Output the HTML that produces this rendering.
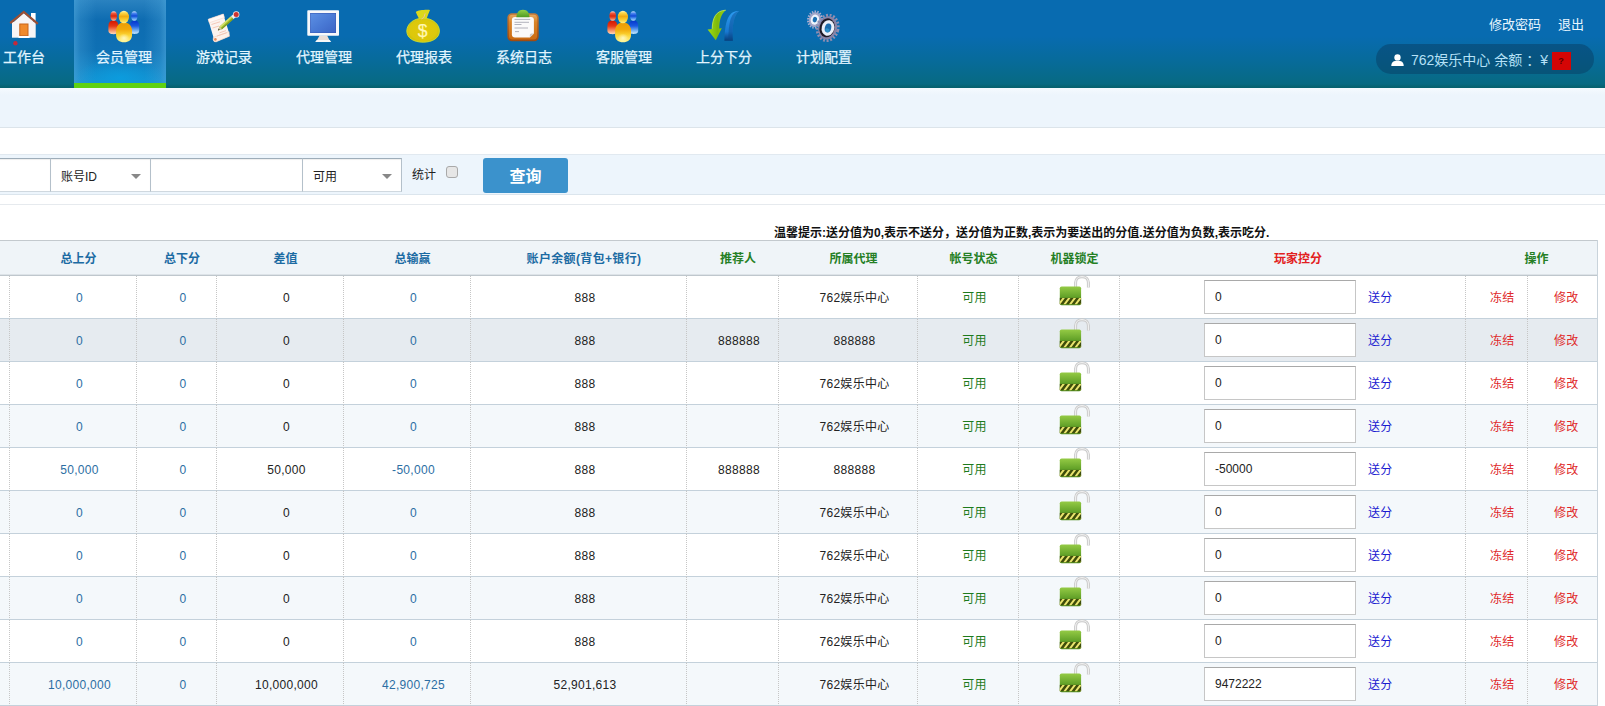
<!DOCTYPE html>
<html lang="zh-CN">
<head>
<meta charset="utf-8">
<title>会员管理</title>
<style>
*{box-sizing:border-box;}
html,body{margin:0;padding:0;}
body{width:1605px;height:706px;overflow:hidden;background:#fff;position:relative;
  font-family:"Liberation Sans","Noto Sans CJK SC",sans-serif;font-size:12px;color:#222;}
a{text-decoration:none;}
/* ---------- header ---------- */
#hd{position:absolute;left:0;top:0;width:1605px;height:88px;
  background:linear-gradient(to bottom,#086bb0 0,#086bb0 36px,#076b9b 60px,#076a82 84px,#06626f 87px,#06626f 88px);}
#nav{position:absolute;left:-26px;top:0;height:88px;margin:0;padding:0;list-style:none;white-space:nowrap;}
#nav li{position:absolute;top:0;width:92px;height:88px;padding-left:8px;}
#nav li span{position:absolute;left:8px;width:84px;top:48px;line-height:18px;text-align:center;
  font-size:14px;color:#e2f5ff;-webkit-text-stroke:.25px #e2f5ff;}
#nav li.on{background:
  radial-gradient(ellipse 44px 20px at 50% 78px,rgba(10,158,224,.85) 0,rgba(10,158,224,0) 100%),
  linear-gradient(to right,rgba(70,160,215,.7) 0,rgba(70,160,215,.35) 6px,rgba(70,160,215,0) 22px,rgba(70,160,215,0) 70px,rgba(70,160,215,.35) 86px,rgba(70,160,215,.7) 92px),
  linear-gradient(to bottom,#2a82c0 0,#0e6cb1 20px,#0e70b4 50px,#1590cf 80px,#1590cf 100%);
  border-bottom:5px solid #5fd111;}
#icons{position:absolute;left:0;top:0;}
#tr{position:absolute;top:16px;right:21px;font-size:13px;color:#eaf7ff;line-height:18px;}
#tr a{color:#eaf7ff;margin-left:14px;}
#pill{position:absolute;left:1376px;top:44px;width:218px;height:30px;border-radius:15px;
  background:rgba(8,62,100,.5);color:#b5e1f7;font-size:14px;line-height:30px;white-space:nowrap;}
#pill .t{position:absolute;left:35px;top:1px;}
#pill .q{position:absolute;left:175.6px;top:7.5px;width:19px;height:18px;background:#d40505;color:#5a0000;
  font-size:9px;font-weight:bold;line-height:18px;text-align:center;}
/* ---------- bands ---------- */
#b1{position:absolute;left:0;top:88px;width:1605px;height:40px;background:linear-gradient(to bottom,#f5fafe 0,#edf5fc 7px);border-bottom:1px solid #dce4ea;}
#b2{position:absolute;left:0;top:154px;width:1605px;height:41px;background:#edf5fc;border-top:1px solid #e1e9f0;border-bottom:1px solid #dbe5ed;}
#ln{position:absolute;left:0;top:204px;width:1605px;height:1px;background:#e6eaee;}
.fi{position:absolute;top:158px;height:34px;background:#fff;border:1px solid #b4c0ca;border-top-color:#9eadb9;border-bottom-color:#cfd8df;
  font-size:12px;line-height:32px;color:#222;padding:2px 0 0 10px;box-shadow:inset 0 1px 1px rgba(0,0,0,.07);}
.fi i{position:absolute;right:9px;top:15px;width:0;height:0;border-left:5px solid transparent;border-right:5px solid transparent;border-top:5px solid #888;}
#st{position:absolute;left:412px;top:166px;line-height:18px;font-size:12px;color:#222;}
#cb{position:absolute;left:446px;top:166px;width:12px;height:12px;border:1px solid #a9a9a9;border-radius:3px;background:#e6e6e6;}
#btn{position:absolute;left:483px;top:158px;width:85px;height:35px;border-radius:3px;background:#3b92cc;
  color:#fff;font-size:16px;font-weight:bold;text-align:center;line-height:37px;letter-spacing:0;}
#tip{position:absolute;left:774px;top:224px;line-height:18px;font-size:12px;font-weight:bold;color:#111;white-space:nowrap;}
/* ---------- table ---------- */
#tb{position:absolute;left:-90px;top:240px;width:1688px;border-collapse:separate;border-spacing:0;table-layout:fixed;
  border-right:1px solid #c9d3db;}
#tb th{height:36px;line-height:29px;background:#eff4f8;border-top:1px solid #c3c9ce;border-bottom:1px solid #bfc7cd;box-shadow:inset 0 -1px 0 #dde3e8;
  font-size:12px;font-weight:bold;padding:3px 0 0 10px;text-align:center;color:#1c6ba3;}
#tb th.g{color:#257f25;}
#tb th.r{color:#e22020;}
#tb td{height:43px;line-height:40px;border-bottom:1px solid #c4d1db;border-right:1px dotted #c6c6c6;padding:2px 0 0 13px;text-align:center;
  font-size:12px;color:#222;white-space:nowrap;position:relative;letter-spacing:.3px;}
#tb td:last-child{border-right:none;}
#tb tr.e td{background:#f4f8fb;}
#tb tr.h td{background:#e6ebf0;}
#tb td.b{color:#2c6ea3;}
#tb td.g{color:#1d7b1d;}
#tb td.op{text-align:left;padding-left:24px;}
#tb td.op+td.op{padding-left:26px;}
#tb td.op a{color:#e02a2a;}
#tb td.k{text-align:left;padding:0;}
.inp{letter-spacing:0;position:absolute;left:84px;top:4px;width:152px;height:34px;background:#fff;border:1px solid #c6c6c6;border-top-color:#a9a9a9;
  line-height:32px;padding-left:10px;font-size:12px;color:#222;}
.sf{position:absolute;left:248px;top:13px;line-height:18px;color:#1a1ad0;}
.lk{position:absolute;left:39px;top:-1px;}
</style>
</head>
<body>
<div id="hd">
  <ul id="nav">
    <li style="left:0"><span>工作台</span></li>
    <li class="on" style="left:100px"><span>会员管理</span></li>
    <li style="left:200px"><span>游戏记录</span></li>
    <li style="left:300px"><span>代理管理</span></li>
    <li style="left:400px"><span>代理报表</span></li>
    <li style="left:500px"><span>系统日志</span></li>
    <li style="left:600px"><span>客服管理</span></li>
    <li style="left:700px"><span>上分下分</span></li>
    <li style="left:800px"><span>计划配置</span></li>
  </ul>
  <svg id="icons" width="900" height="88" viewBox="0 0 900 88">
<defs>
<linearGradient id="gy" x1="0" y1="0" x2="0" y2="1"><stop offset="0" stop-color="#eb9c04"/><stop offset="0.35" stop-color="#f2a80a"/><stop offset="0.62" stop-color="#fbd232"/><stop offset="1" stop-color="#fff690"/></linearGradient>
<linearGradient id="gyh" x1="0" y1="0" x2="0" y2="1"><stop offset="0" stop-color="#fff8c0"/><stop offset="0.18" stop-color="#fbd84a"/><stop offset="0.45" stop-color="#f0ac10"/><stop offset="0.7" stop-color="#f8cc30"/><stop offset="1" stop-color="#fff080"/></linearGradient>
<linearGradient id="gr" x1="0" y1="0" x2="0" y2="1"><stop offset="0" stop-color="#d41600"/><stop offset="0.4" stop-color="#e63814"/><stop offset="0.75" stop-color="#f89a70"/><stop offset="1" stop-color="#ffdcc0"/></linearGradient>
<linearGradient id="gb" x1="0" y1="0" x2="0" y2="1"><stop offset="0" stop-color="#0636cc"/><stop offset="0.4" stop-color="#1a5ae0"/><stop offset="0.75" stop-color="#78b4f4"/><stop offset="1" stop-color="#d0ecff"/></linearGradient>
<linearGradient id="gscr" x1="0" y1="0" x2="1" y2="1"><stop offset="0" stop-color="#5c90e4"/><stop offset=".55" stop-color="#4878d4"/><stop offset="1" stop-color="#3c64c4"/></linearGradient>
<radialGradient id="gbag" cx=".5" cy=".5" r=".6"><stop offset="0" stop-color="#e3c90a"/><stop offset=".7" stop-color="#dcc80c"/><stop offset="1" stop-color="#c2b606"/></radialGradient>
<linearGradient id="gclip" x1="0" y1="0" x2="0" y2="1"><stop offset="0" stop-color="#c47a3a"/><stop offset=".5" stop-color="#b8601a"/><stop offset="1" stop-color="#a04a10"/></linearGradient><linearGradient id="gclip2" x1="0" y1="0" x2="0" y2="1"><stop offset="0" stop-color="#e6a860"/><stop offset=".3" stop-color="#d98428"/><stop offset="1" stop-color="#cc6c14"/></linearGradient>
<linearGradient id="ggreen" x1="0" y1="0" x2="0" y2="1"><stop offset="0" stop-color="#8fd04a"/><stop offset="1" stop-color="#4f9a22"/></linearGradient>
<linearGradient id="garr" x1="0" y1="0" x2="1" y2="0"><stop offset="0" stop-color="#9ede12"/><stop offset=".55" stop-color="#7fb80a"/><stop offset="1" stop-color="#9ad414"/></linearGradient>
<linearGradient id="gblue" x1="0" y1="0" x2="0" y2="1"><stop offset="0" stop-color="#2d9cf0"/><stop offset=".7" stop-color="#1878d0"/><stop offset="1" stop-color="#073c78"/></linearGradient>
<linearGradient id="grh" x1="0" y1="0" x2="0" y2="1"><stop offset="0" stop-color="#ffd4c8"/><stop offset="0.22" stop-color="#ee5a40"/><stop offset="0.5" stop-color="#dc2608"/><stop offset="0.72" stop-color="#ec5a38"/><stop offset="1" stop-color="#ffc8a8"/></linearGradient>
<linearGradient id="gbh" x1="0" y1="0" x2="0" y2="1"><stop offset="0" stop-color="#c8e4ff"/><stop offset="0.22" stop-color="#4a86f0"/><stop offset="0.5" stop-color="#1048d8"/><stop offset="0.72" stop-color="#4a90f0"/><stop offset="1" stop-color="#b0dcff"/></linearGradient>
<radialGradient id="ghl" cx=".5" cy=".55" r=".5"><stop offset="0" stop-color="#fffde0" stop-opacity=".75"/><stop offset="1" stop-color="#fffde0" stop-opacity="0"/></radialGradient>
<g id="ppl">
  <path d="M-15.6 26 C-15.6 22.4 -13.6 20.6 -10.6 20.6 C-7.6 20.6 -5.7 22.4 -5.7 26 V30.6 C-5.7 33.4 -7.6 34.2 -10.6 34.2 C-13.6 34.2 -15.6 33.4 -15.6 30.6 Z" fill="url(#gr)"/>
  <ellipse cx="-10.3" cy="16" rx="3.3" ry="4.8" fill="url(#grh)"/>
  <path d="M15.2 26 C15.2 22.4 13.4 20.6 10.6 20.6 C7.8 20.6 6 22.4 6 26 V30.6 C6 33.4 7.8 34 10.6 34 C13.4 34 15.2 33.4 15.2 30.6 Z" fill="url(#gb)"/>
  <ellipse cx="10.3" cy="16" rx="3.2" ry="4.8" fill="url(#gbh)"/>
  <path d="M-7.9 31 C-7.9 25.4 -4.6 22.4 0 22.4 C4.6 22.4 8 25.4 8 31 V35.2 C8 39.8 4.6 42.2 0 42.2 C-4.6 42.2 -7.9 39.8 -7.9 35.2 Z" fill="url(#gy)"/>
  <ellipse cx="0" cy="37.6" rx="5.4" ry="4.6" fill="url(#ghl)"/>
  <ellipse cx="-.1" cy="17" rx="5.1" ry="6.3" fill="url(#gyh)"/>
</g>
</defs>
<!-- house -->
<g>
  <rect x="31" y="13" width="4.6" height="8" fill="#fff"/>
  <rect x="12" y="22" width="23.7" height="15.7" fill="#f7f5f6"/>
  <path d="M12 23.5 L23.8 13 L35.7 23.5 Z" fill="#f7f5f6"/>
  <path d="M10.2 23.2 L23.8 12 L37.8 23.8" fill="none" stroke="#9c4f34" stroke-width="2.2" stroke-linejoin="miter"/>
  <rect x="19.8" y="24" width="8.2" height="11.7" fill="#f08a2c" stroke="#c8641a" stroke-width="1"/>
  <rect x="18.5" y="36" width="11" height="2" fill="#fff"/>
  <circle cx="15.4" cy="43.2" r="2.2" fill="#c22a3a"/>
</g>
<!-- people (active) -->
<use href="#ppl" x="124" y="0"/>
<!-- scroll + pencil -->
<g>
  <path d="M208.2 19.2 L223.4 14 L224.6 18.6 L228.2 30 L229.4 36.2 L216.2 41.8 C214 42.2 212.6 40.4 213.6 38.4 L213.2 36.6 L209.2 23 Z" fill="#fbf3ef"/>
  <path d="M208.2 19.2 L223.4 14 L224.4 17.6 L209.2 22.8 Z" fill="#fffaf8" stroke="#f3d5cb" stroke-width=".6"/>
  <path d="M213.4 37.4 L229 31.6 L229.4 36.2 L216.2 41.8 C214 42.2 212.6 40.4 213.4 37.4 Z" fill="#fdf1ea" stroke="#f0cbb8" stroke-width=".6"/>
  <circle cx="215.4" cy="39.4" r="1.3" fill="#e88a58"/>
  <path d="M211.5 24.5 L220 21.8 M212.6 28 L219 26 M219.5 32.8 L226 30.6 M217 36 L226.8 32.8" stroke="#f3c3b2" stroke-width=".9"/>
  <path d="M217.9 30.4 L219.6 26.6 L231 16.2 L233.6 19 L222 29.2 Z" fill="#a4c032"/>
  <path d="M219.6 26.6 L231 16.2 L232 17.2 L220.6 27.8 Z" fill="#d6e070"/>
  <path d="M221.2 28.6 L232.8 18.2 L233.6 19 L222 29.2 Z" fill="#7a9a1e"/>
  <path d="M217.9 30.4 L219.6 26.6 L222 29.2 Z" fill="#d9c8a0"/>
  <path d="M217.9 30.4 L218.7 28.6 L219.8 29.7 Z" fill="#4a4036"/>
  <path d="M231 16.2 L233.2 14.2 L235.8 17 L233.6 19 Z" fill="#f4f0ee"/>
  <circle cx="236.2" cy="14.4" r="3.2" fill="#f6e6e4"/>
  <circle cx="236.2" cy="14.6" r="2.5" fill="#cf3430"/>
</g>
<!-- monitor -->
<g>
  <path d="M319.6 35.5 H327.1 L329.6 40.4 H316.8 Z" fill="#eaddd6"/>
  <path d="M316.6 40 H329.8 L331.2 42 H315.2 Z" fill="#f7f7f7"/>
  <rect x="307.3" y="10.2" width="31.7" height="25.6" rx=".8" fill="#f7f8fb"/>
  <rect x="310.1" y="13" width="25.9" height="20" fill="#3353ae"/>
  <rect x="310.5" y="13.5" width="25.1" height="19.1" fill="url(#gscr)"/>
</g>
<!-- money bag -->
<g>
  <path d="M419.4 19.4 C417.6 15.8 416.3 13.6 415.8 12 C417.6 10 427 9.4 430 10 C429 12.6 427.6 15.8 426.4 19.4 Z" fill="#dbd81a"/>
  <path d="M423.1 18.2 C433 18.2 439.4 24.5 439.4 31 C439.4 38 432.5 42.2 423.1 42.2 C413.7 42.2 406.8 38 406.8 31 C406.8 24.5 413.2 18.2 423.1 18.2 Z" fill="url(#gbag)" stroke="#cfe02c" stroke-width=".9"/>
  <path d="M421.4 19 L423.8 17.6 L425.2 13.4" fill="none" stroke="#efc0a4" stroke-width=".9"/>
  <text x="422.6" y="36.6" text-anchor="middle" font-family="Liberation Sans, sans-serif" font-size="17.5" fill="#fff7b4" stroke="#fff7b4" stroke-width=".25">$</text>
</g>
<!-- clipboard -->
<g>
  <rect x="507.4" y="13.3" width="31.3" height="28" rx="4.5" fill="url(#gclip)"/>
  <rect x="509" y="14.8" width="28.1" height="24.6" rx="3.4" fill="url(#gclip2)"/>
  <path d="M515 16.9 H531 Q533.9 16.9 533.9 19.8 V33.4 L529.8 37.5 H515 Q511.9 37.5 511.9 34.6 V19.8 Q511.9 16.9 515 16.9 Z" fill="#fbfafa"/>
  <path d="M529.8 37.5 V35 Q529.8 33.4 531.4 33.4 H533.9 Z" fill="#cfcac6"/>
  <path d="M514.5 19.4 H530.2 M514.5 22.3 H529 M514.5 24.5 H521.5 M514.5 28 H528 M515 31.6 H519" stroke="#a9a9b4" stroke-width=".9"/>
  <path d="M516.4 17.2 C516.4 13.4 518.4 9.8 523 9.8 C527.6 9.8 529.5 13.4 529.5 17.2 Z" fill="url(#ggreen)"/>
</g>
<!-- people 2 -->
<use href="#ppl" x="623" y="0"/>
<!-- arrows -->
<g>
  <path d="M725.8 10.2 C716 10.4 712.4 18 712.2 28.9 L707.6 29.4 L715.8 40.3 L721.8 28.3 L719.2 28.6 C719.4 20 721 14 725.8 10.2 Z" fill="url(#garr)"/>
  <path d="M725.8 10.2 C716 10.4 712.4 18 712.2 28.9" fill="none" stroke="#c6ee50" stroke-width=".8"/>
  <path d="M739 11 C730 11 725 17 724.4 40.8 L732.8 40.8 C732 25 733.6 16 739 11 Z" fill="url(#gblue)"/>
  <path d="M739 11 C731.5 12.5 728.6 19 728.4 40.8 L732.8 40.8 C732 25 733.6 16 739 11 Z" fill="#0a4a8c" opacity=".45"/>
</g>
<!-- gears -->
<g>
  <g transform="translate(814.9 19.6) rotate(14)">
    <ellipse rx="6.7" ry="8.1" fill="none" stroke="#a9aed0" stroke-width="2.2" stroke-dasharray="1.45 1.25"/>
    <ellipse rx="6" ry="7.4" fill="#a3a6c8"/>
    <ellipse rx="4.2" ry="5.1" fill="#eef4fc"/>
    <ellipse rx="2.1" ry="2.8" fill="#1c70b2"/>
  </g>
  <g transform="translate(827.7 27.9) rotate(14)">
    <ellipse rx="10.4" ry="12.8" fill="none" stroke="#918eb0" stroke-width="2.8" stroke-dasharray="1.9 1.65"/>
    <ellipse rx="9.4" ry="11.8" fill="#8783a6"/>
    <ellipse cx="-.6" rx="7.6" ry="9.6" fill="#1d1a26"/>
    <ellipse cx=".3" rx="6.3" ry="7.9" fill="#eaf0fa"/>
    <ellipse cx=".3" rx="3.2" ry="4.6" fill="#1b6cae"/>
    <ellipse cx=".3" cy="2.4" rx="2.2" ry="1.9" fill="#2f9ad0" opacity=".8"/>
  </g>
</g>
</svg>

  <div id="tr"><a>修改密码</a><a style="margin-left:17px">退出</a></div>
  <div id="pill">
    <svg style="position:absolute;left:14.5px;top:10.2px" width="13" height="12.2" viewBox="0 0 14 13" preserveAspectRatio="none"><circle cx="7" cy="3.6" r="3.4" fill="#fff"/><path d="M0.3 13 C0.3 8.5 3 7.2 7 7.2 C11 7.2 13.7 8.5 13.7 13 Z" fill="#fff"/></svg>
    <span class="t">762娱乐中心 余额<span style="position:relative;left:4px">：</span><span style="margin-left:4px">¥</span></span><span class="q">?</span>
  </div>
</div>
<div id="b1"></div>
<div id="b2"></div>
<div id="ln"></div>
<div class="fi" style="left:-60px;width:111px"></div>
<div class="fi" style="left:50px;width:101px">账号ID<i></i></div>
<div class="fi" style="left:150px;width:153px"></div>
<div class="fi" style="left:302px;width:100px">可用<i></i></div>
<div id="st">统计</div><div id="cb"></div>
<div id="btn">查询</div>
<div id="tip">温馨提示:送分值为0,表示不送分，送分值为正数,表示为要送出的分值.送分值为负数,表示吃分.</div>
<svg width="0" height="0" style="position:absolute"><defs><linearGradient id="lg" x1="0" y1="0" x2="0" y2="1"><stop offset="0" stop-color="#95cb45"/><stop offset=".6" stop-color="#5e9e26"/><stop offset="1" stop-color="#4f8c1c"/></linearGradient><clipPath id="lc"><rect x="1.8" y="22.9" width="21.3" height="6.3"/></clipPath></defs></svg>
<table id="tb"><colgroup><col style="width:100px"><col style="width:127px"><col style="width:80px"><col style="width:127px"><col style="width:127px"><col style="width:216px"><col style="width:92px"><col style="width:139px"><col style="width:101px"><col style="width:101px"><col style="width:346px"><col style="width:62px"><col style="width:69px"></colgroup>
<thead><tr><th></th><th>总上分</th><th>总下分</th><th>差值</th><th>总输赢</th><th style="letter-spacing:.35px">账户余额(背包+银行)</th><th class="g">推荐人</th><th class="g">所属代理</th><th class="g">帐号状态</th><th class="g">机器锁定</th><th class="r">玩家控分</th><th class="g" colspan="2">操作</th></tr></thead><tbody>
<tr><td></td><td class="b">0</td><td class="b">0</td><td>0</td><td class="b">0</td><td>888</td><td></td><td>762娱乐中心</td><td class="g">可用</td><td class="k"><svg class="lk" width="34" height="34" viewBox="0 0 34 34"><path d="M17.6 13 V7.5 C17.6 -0.3 30.4 -0.3 30.4 7.5 V12.6" fill="none" stroke="#c9c9c9" stroke-width="3"/><path d="M17.6 13 V7.5 C17.6 -0.3 30.4 -0.3 30.4 7.5 V12.6" fill="none" stroke="#f1f1f1" stroke-width="1.1"/><rect x="1.8" y="11.4" width="21.3" height="18.9" rx="1.8" fill="url(#lg)"/><rect x="1.8" y="22.9" width="21.3" height="6.3" fill="#3d4d0a"/><g clip-path="url(#lc)"><path d="M0.4 30 L6.4 22 M6 30 L12 22 M11.6 30 L17.6 22 M17.2 30 L23.2 22 M22.8 30 L28.8 22" stroke="#e9e46e" stroke-width="2"/></g></svg></td><td class="k"><div class="inp">0</div><a class="sf">送分</a></td><td class="op"><a>冻结</a></td><td class="op"><a>修改</a></td></tr>
<tr class="h"><td></td><td class="b">0</td><td class="b">0</td><td>0</td><td class="b">0</td><td>888</td><td>888888</td><td>888888</td><td class="g">可用</td><td class="k"><svg class="lk" width="34" height="34" viewBox="0 0 34 34"><path d="M17.6 13 V7.5 C17.6 -0.3 30.4 -0.3 30.4 7.5 V12.6" fill="none" stroke="#c9c9c9" stroke-width="3"/><path d="M17.6 13 V7.5 C17.6 -0.3 30.4 -0.3 30.4 7.5 V12.6" fill="none" stroke="#f1f1f1" stroke-width="1.1"/><rect x="1.8" y="11.4" width="21.3" height="18.9" rx="1.8" fill="url(#lg)"/><rect x="1.8" y="22.9" width="21.3" height="6.3" fill="#3d4d0a"/><g clip-path="url(#lc)"><path d="M0.4 30 L6.4 22 M6 30 L12 22 M11.6 30 L17.6 22 M17.2 30 L23.2 22 M22.8 30 L28.8 22" stroke="#e9e46e" stroke-width="2"/></g></svg></td><td class="k"><div class="inp">0</div><a class="sf">送分</a></td><td class="op"><a>冻结</a></td><td class="op"><a>修改</a></td></tr>
<tr><td></td><td class="b">0</td><td class="b">0</td><td>0</td><td class="b">0</td><td>888</td><td></td><td>762娱乐中心</td><td class="g">可用</td><td class="k"><svg class="lk" width="34" height="34" viewBox="0 0 34 34"><path d="M17.6 13 V7.5 C17.6 -0.3 30.4 -0.3 30.4 7.5 V12.6" fill="none" stroke="#c9c9c9" stroke-width="3"/><path d="M17.6 13 V7.5 C17.6 -0.3 30.4 -0.3 30.4 7.5 V12.6" fill="none" stroke="#f1f1f1" stroke-width="1.1"/><rect x="1.8" y="11.4" width="21.3" height="18.9" rx="1.8" fill="url(#lg)"/><rect x="1.8" y="22.9" width="21.3" height="6.3" fill="#3d4d0a"/><g clip-path="url(#lc)"><path d="M0.4 30 L6.4 22 M6 30 L12 22 M11.6 30 L17.6 22 M17.2 30 L23.2 22 M22.8 30 L28.8 22" stroke="#e9e46e" stroke-width="2"/></g></svg></td><td class="k"><div class="inp">0</div><a class="sf">送分</a></td><td class="op"><a>冻结</a></td><td class="op"><a>修改</a></td></tr>
<tr class="e"><td></td><td class="b">0</td><td class="b">0</td><td>0</td><td class="b">0</td><td>888</td><td></td><td>762娱乐中心</td><td class="g">可用</td><td class="k"><svg class="lk" width="34" height="34" viewBox="0 0 34 34"><path d="M17.6 13 V7.5 C17.6 -0.3 30.4 -0.3 30.4 7.5 V12.6" fill="none" stroke="#c9c9c9" stroke-width="3"/><path d="M17.6 13 V7.5 C17.6 -0.3 30.4 -0.3 30.4 7.5 V12.6" fill="none" stroke="#f1f1f1" stroke-width="1.1"/><rect x="1.8" y="11.4" width="21.3" height="18.9" rx="1.8" fill="url(#lg)"/><rect x="1.8" y="22.9" width="21.3" height="6.3" fill="#3d4d0a"/><g clip-path="url(#lc)"><path d="M0.4 30 L6.4 22 M6 30 L12 22 M11.6 30 L17.6 22 M17.2 30 L23.2 22 M22.8 30 L28.8 22" stroke="#e9e46e" stroke-width="2"/></g></svg></td><td class="k"><div class="inp">0</div><a class="sf">送分</a></td><td class="op"><a>冻结</a></td><td class="op"><a>修改</a></td></tr>
<tr><td></td><td class="b">50,000</td><td class="b">0</td><td>50,000</td><td class="b">-50,000</td><td>888</td><td>888888</td><td>888888</td><td class="g">可用</td><td class="k"><svg class="lk" width="34" height="34" viewBox="0 0 34 34"><path d="M17.6 13 V7.5 C17.6 -0.3 30.4 -0.3 30.4 7.5 V12.6" fill="none" stroke="#c9c9c9" stroke-width="3"/><path d="M17.6 13 V7.5 C17.6 -0.3 30.4 -0.3 30.4 7.5 V12.6" fill="none" stroke="#f1f1f1" stroke-width="1.1"/><rect x="1.8" y="11.4" width="21.3" height="18.9" rx="1.8" fill="url(#lg)"/><rect x="1.8" y="22.9" width="21.3" height="6.3" fill="#3d4d0a"/><g clip-path="url(#lc)"><path d="M0.4 30 L6.4 22 M6 30 L12 22 M11.6 30 L17.6 22 M17.2 30 L23.2 22 M22.8 30 L28.8 22" stroke="#e9e46e" stroke-width="2"/></g></svg></td><td class="k"><div class="inp">-50000</div><a class="sf">送分</a></td><td class="op"><a>冻结</a></td><td class="op"><a>修改</a></td></tr>
<tr class="e"><td></td><td class="b">0</td><td class="b">0</td><td>0</td><td class="b">0</td><td>888</td><td></td><td>762娱乐中心</td><td class="g">可用</td><td class="k"><svg class="lk" width="34" height="34" viewBox="0 0 34 34"><path d="M17.6 13 V7.5 C17.6 -0.3 30.4 -0.3 30.4 7.5 V12.6" fill="none" stroke="#c9c9c9" stroke-width="3"/><path d="M17.6 13 V7.5 C17.6 -0.3 30.4 -0.3 30.4 7.5 V12.6" fill="none" stroke="#f1f1f1" stroke-width="1.1"/><rect x="1.8" y="11.4" width="21.3" height="18.9" rx="1.8" fill="url(#lg)"/><rect x="1.8" y="22.9" width="21.3" height="6.3" fill="#3d4d0a"/><g clip-path="url(#lc)"><path d="M0.4 30 L6.4 22 M6 30 L12 22 M11.6 30 L17.6 22 M17.2 30 L23.2 22 M22.8 30 L28.8 22" stroke="#e9e46e" stroke-width="2"/></g></svg></td><td class="k"><div class="inp">0</div><a class="sf">送分</a></td><td class="op"><a>冻结</a></td><td class="op"><a>修改</a></td></tr>
<tr><td></td><td class="b">0</td><td class="b">0</td><td>0</td><td class="b">0</td><td>888</td><td></td><td>762娱乐中心</td><td class="g">可用</td><td class="k"><svg class="lk" width="34" height="34" viewBox="0 0 34 34"><path d="M17.6 13 V7.5 C17.6 -0.3 30.4 -0.3 30.4 7.5 V12.6" fill="none" stroke="#c9c9c9" stroke-width="3"/><path d="M17.6 13 V7.5 C17.6 -0.3 30.4 -0.3 30.4 7.5 V12.6" fill="none" stroke="#f1f1f1" stroke-width="1.1"/><rect x="1.8" y="11.4" width="21.3" height="18.9" rx="1.8" fill="url(#lg)"/><rect x="1.8" y="22.9" width="21.3" height="6.3" fill="#3d4d0a"/><g clip-path="url(#lc)"><path d="M0.4 30 L6.4 22 M6 30 L12 22 M11.6 30 L17.6 22 M17.2 30 L23.2 22 M22.8 30 L28.8 22" stroke="#e9e46e" stroke-width="2"/></g></svg></td><td class="k"><div class="inp">0</div><a class="sf">送分</a></td><td class="op"><a>冻结</a></td><td class="op"><a>修改</a></td></tr>
<tr class="e"><td></td><td class="b">0</td><td class="b">0</td><td>0</td><td class="b">0</td><td>888</td><td></td><td>762娱乐中心</td><td class="g">可用</td><td class="k"><svg class="lk" width="34" height="34" viewBox="0 0 34 34"><path d="M17.6 13 V7.5 C17.6 -0.3 30.4 -0.3 30.4 7.5 V12.6" fill="none" stroke="#c9c9c9" stroke-width="3"/><path d="M17.6 13 V7.5 C17.6 -0.3 30.4 -0.3 30.4 7.5 V12.6" fill="none" stroke="#f1f1f1" stroke-width="1.1"/><rect x="1.8" y="11.4" width="21.3" height="18.9" rx="1.8" fill="url(#lg)"/><rect x="1.8" y="22.9" width="21.3" height="6.3" fill="#3d4d0a"/><g clip-path="url(#lc)"><path d="M0.4 30 L6.4 22 M6 30 L12 22 M11.6 30 L17.6 22 M17.2 30 L23.2 22 M22.8 30 L28.8 22" stroke="#e9e46e" stroke-width="2"/></g></svg></td><td class="k"><div class="inp">0</div><a class="sf">送分</a></td><td class="op"><a>冻结</a></td><td class="op"><a>修改</a></td></tr>
<tr><td></td><td class="b">0</td><td class="b">0</td><td>0</td><td class="b">0</td><td>888</td><td></td><td>762娱乐中心</td><td class="g">可用</td><td class="k"><svg class="lk" width="34" height="34" viewBox="0 0 34 34"><path d="M17.6 13 V7.5 C17.6 -0.3 30.4 -0.3 30.4 7.5 V12.6" fill="none" stroke="#c9c9c9" stroke-width="3"/><path d="M17.6 13 V7.5 C17.6 -0.3 30.4 -0.3 30.4 7.5 V12.6" fill="none" stroke="#f1f1f1" stroke-width="1.1"/><rect x="1.8" y="11.4" width="21.3" height="18.9" rx="1.8" fill="url(#lg)"/><rect x="1.8" y="22.9" width="21.3" height="6.3" fill="#3d4d0a"/><g clip-path="url(#lc)"><path d="M0.4 30 L6.4 22 M6 30 L12 22 M11.6 30 L17.6 22 M17.2 30 L23.2 22 M22.8 30 L28.8 22" stroke="#e9e46e" stroke-width="2"/></g></svg></td><td class="k"><div class="inp">0</div><a class="sf">送分</a></td><td class="op"><a>冻结</a></td><td class="op"><a>修改</a></td></tr>
<tr class="e"><td></td><td class="b">10,000,000</td><td class="b">0</td><td>10,000,000</td><td class="b">42,900,725</td><td>52,901,613</td><td></td><td>762娱乐中心</td><td class="g">可用</td><td class="k"><svg class="lk" width="34" height="34" viewBox="0 0 34 34"><path d="M17.6 13 V7.5 C17.6 -0.3 30.4 -0.3 30.4 7.5 V12.6" fill="none" stroke="#c9c9c9" stroke-width="3"/><path d="M17.6 13 V7.5 C17.6 -0.3 30.4 -0.3 30.4 7.5 V12.6" fill="none" stroke="#f1f1f1" stroke-width="1.1"/><rect x="1.8" y="11.4" width="21.3" height="18.9" rx="1.8" fill="url(#lg)"/><rect x="1.8" y="22.9" width="21.3" height="6.3" fill="#3d4d0a"/><g clip-path="url(#lc)"><path d="M0.4 30 L6.4 22 M6 30 L12 22 M11.6 30 L17.6 22 M17.2 30 L23.2 22 M22.8 30 L28.8 22" stroke="#e9e46e" stroke-width="2"/></g></svg></td><td class="k"><div class="inp">9472222</div><a class="sf">送分</a></td><td class="op"><a>冻结</a></td><td class="op"><a>修改</a></td></tr>
</tbody></table>
</body>
</html>
